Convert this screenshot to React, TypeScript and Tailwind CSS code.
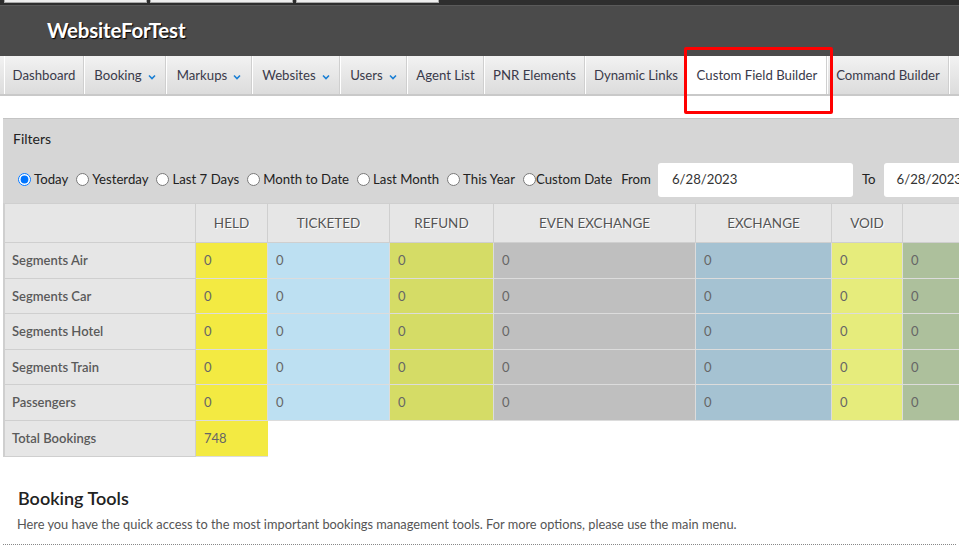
import React from "react";

const navItems: { label: string; w: string; caret?: boolean; active?: boolean }[] = [
  { label: "Dashboard", w: "w-[80px]" },
  { label: "Booking", w: "w-[82px]", caret: true },
  { label: "Markups", w: "w-[86px]", caret: true },
  { label: "Websites", w: "w-[88px]", caret: true },
  { label: "Users", w: "w-[67px]", caret: true },
  { label: "Agent List", w: "w-[77px]" },
  { label: "PNR Elements", w: "w-[101px]" },
  { label: "Dynamic Links", w: "w-[102px]" },
  { label: "Custom Field Builder", w: "w-[140px]", active: true },
  { label: "Command Builder", w: "w-[122px]" },
  { label: "", w: "w-[60px]" },
];

const filters = ["Today", "Yesterday", "Last 7 Days", "Month to Date", "Last Month", "This Year"];

const columns: { label: string; w: string; bg: string }[] = [
  { label: "HELD", w: "w-[72px]", bg: "bg-[#f3ea42]" },
  { label: "TICKETED", w: "w-[122px]", bg: "bg-[#bde0f2]" },
  { label: "REFUND", w: "w-[104px]", bg: "bg-[#d5dc66]" },
  { label: "EVEN EXCHANGE", w: "w-[202px]", bg: "bg-[#bfbfbf]" },
  { label: "EXCHANGE", w: "w-[136px]", bg: "bg-[#a5c2d2]" },
  { label: "VOID", w: "w-[71px]", bg: "bg-[#e6ec7c]" },
  { label: "", w: "w-[80px]", bg: "bg-[#adc09c]" },
];

const rows: { label: string; h: string }[] = [
  { label: "Segments Air", h: "h-[36px]" },
  { label: "Segments Car", h: "h-[35px]" },
  { label: "Segments Hotel", h: "h-[36px]" },
  { label: "Segments Train", h: "h-[35px]" },
  { label: "Passengers", h: "h-[36px]" },
];

function Caret() {
  return (
    <svg width="8" height="6" viewBox="0 0 8 6" className="ml-[6px] mt-[1px]">
      <path d="M1 1.5 L4 4.5 L7 1.5" fill="none" stroke="#1a7fd4" strokeWidth="1.6" />
    </svg>
  );
}

export default function App() {
  return (
    <div
      className="relative w-[959px] h-[550px] overflow-hidden bg-white text-[#333]"
      style={{ fontFamily: "Lato, 'Open Sans', sans-serif" }}
    >
      {/* Top strip */}
      <div className="h-[6px] bg-[#2e2e2e] flex gap-[3px] pl-[4px] border-b border-[#5a5a5a]">
        <div className="w-[143px] h-[3px] bg-[#eeeeee] border border-t-0 border-[#aaa]" />
        <div className="w-[143px] h-[3px] bg-[#eeeeee] border border-t-0 border-[#aaa]" />
        <div className="w-[143px] h-[3px] bg-[#eeeeee] border border-t-0 border-[#aaa]" />
      </div>

      {/* Header */}
      <div className="h-[50px] bg-[#4b4b4b] flex items-center pl-[47px] pb-[2px]">
        <span
          className="text-white text-[20.5px] font-bold tracking-[-0.2px]"
          style={{ textShadow: "1px 1px 1px #000" }}
        >
          WebsiteForTest
        </span>
      </div>

      {/* Nav */}
      <div className="h-[40px] flex pl-[4px] bg-gradient-to-b from-[#f2f2f2] to-[#dcdcdc] border-b-[2px] border-[#c9c9c9]">
        {navItems.map((n, i) => (
          <div
            key={i}
            className={`${n.w} shrink-0 h-full flex items-center justify-center pt-[2px] whitespace-nowrap text-[13.2px] border-r border-[#cfcfcf] border-l border-l-white ${
              n.active ? "bg-white" : ""
            }`}
          >
            <span className="text-[#3a3a4a]">{n.label}</span>
            {n.caret && <Caret />}
          </div>
        ))}
      </div>

      {/* Red highlight */}
      <div className="absolute left-[684px] top-[47px] w-[149px] h-[67px] border-[3px] border-[#ff0000] rounded-[2px]" />

      {/* Filters */}
      <div className="mt-[22px] ml-[3px] w-[990px] bg-[#d6d6d6] border-t border-[#c4c4c4] pt-[10px] pb-[6px]">
        <div className="pl-[10px] text-[14px] leading-[20px] text-[#222]">Filters</div>
        <div className="mt-[14px] flex items-center pl-[15px] text-[13.2px] text-[#222] h-[34px] whitespace-nowrap">
          {filters.map((f, i) => (
            <label key={f} className="flex items-center shrink-0 mr-[8px]">
              <input
                type="radio"
                name="range"
                defaultChecked={i === 0}
                className="w-[13px] h-[13px] m-0 mr-[3px] accent-[#0075ff]"
              />
              {f}
            </label>
          ))}
          <label className="flex items-center shrink-0">
            <input type="radio" name="range" className="w-[13px] h-[13px] m-0 accent-[#0075ff]" />
            Custom Date
          </label>
          <span className="ml-[9px] shrink-0">From</span>
          <div className="ml-[7px] w-[195px] shrink-0 h-[34px] bg-white rounded-[3px] flex items-center pl-[14px] text-[#333]">
            6/28/2023
          </div>
          <span className="ml-[9px] shrink-0">To</span>
          <div className="ml-[8px] w-[120px] shrink-0 h-[34px] bg-white rounded-[3px] flex items-center pl-[13px] text-[#333]">
            6/28/2023
          </div>
        </div>
      </div>

      {/* Table */}
      <div className="ml-[3px] w-[990px] text-[14px] text-[#555]">
        <div className="flex h-[40px] border-l-2 border-[#cfcfcf]">
          <div className="w-[191px] shrink-0 bg-[#e6e6e6] border-r border-b border-t border-[#cfcfcf]" />
          {columns.map((c, i) => (
            <div
              key={i}
              className={`${c.w} shrink-0 bg-[#e6e6e6] border-r border-b border-t border-[#cfcfcf] flex items-center justify-center pt-[1px] text-[13.5px] text-[#555]`}
              style={{ textShadow: "1px 1px 0 #fff" }}
            >
              {c.label}
            </div>
          ))}
        </div>
        {rows.map((r) => (
          <div key={r.label} className={`flex ${r.h} border-l-2 border-[#cfcfcf]`}>
            <div className="w-[191px] shrink-0 bg-[#e6e6e6] border-r border-b border-[#cfcfcf] flex items-center pl-[7px] pt-[1px] font-semibold text-[13px] text-[#5a5a5a]">
              {r.label}
            </div>
            {columns.map((c, i) => (
              <div
                key={i}
                className={`${c.w} shrink-0 ${c.bg} border-r border-b border-[#dcdcdc] flex items-center pl-[8px] pt-[1px] text-[13px] text-[#666]`}
              >
                0
              </div>
            ))}
          </div>
        ))}
        <div className="flex h-[36px]">
          <div className="w-[193px] shrink-0 bg-[#e6e6e6] border-l-2 border-r border-b border-[#cfcfcf] flex items-center pl-[7px] font-semibold text-[13px] text-[#5a5a5a]">
            Total Bookings
          </div>
          <div className="w-[72px] shrink-0 bg-[#f3ea42] border-b border-[#dcdcdc] flex items-center pl-[8px] text-[13px] text-[#666]">
            748
          </div>
        </div>
      </div>

      {/* Booking Tools */}
      <div className="mt-[29px] px-[3px]">
        <h2 className="pl-[15px] text-[18px] font-semibold text-[#222] leading-[24px]">Booking Tools</h2>
        <p className="pl-[14px] mt-[5px] text-[12.8px] text-[#555] leading-[18px]">
          Here you have the quick access to the most important bookings management tools. For more options, please use the main menu.
        </p>
        <div className="mt-[11px] border-b border-dotted border-[#888]" />
      </div>
    </div>
  );
}
